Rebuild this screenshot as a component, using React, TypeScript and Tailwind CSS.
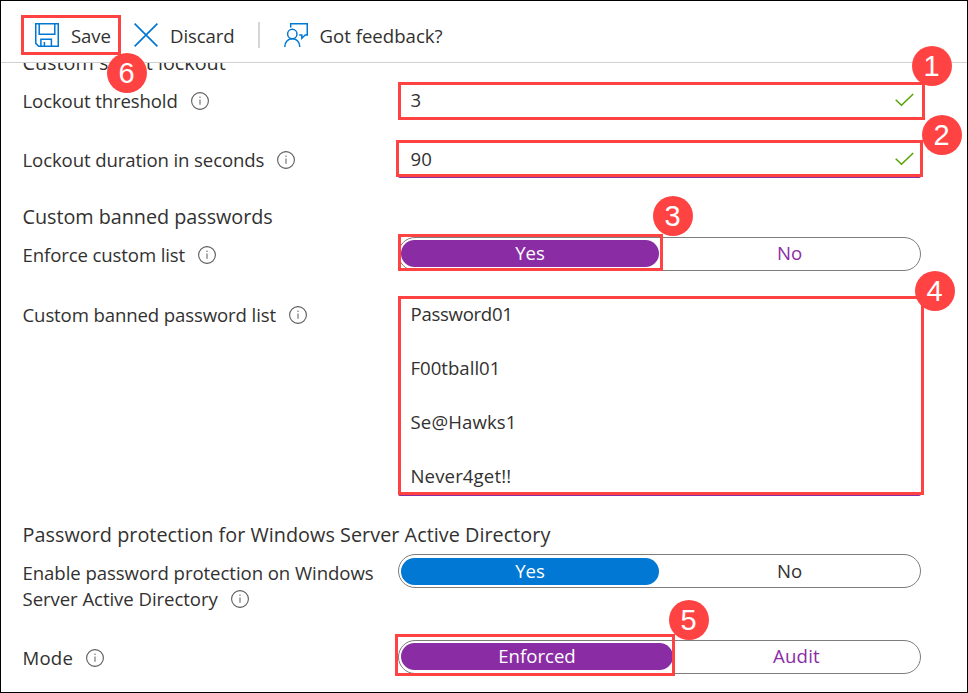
import type { ReactNode } from "react";

function InfoIcon() {
  return (
    <svg className="h-[18px] w-[18px] shrink-0" viewBox="0 0 18 18" fill="none">
      <circle cx="9" cy="9" r="8.4" stroke="#5c5b5a" strokeWidth="1.1" />
      <path d="M9 7.4V12.8" stroke="#777675" strokeWidth="1.2" />
      <circle cx="9" cy="5.2" r="0.8" fill="#777675" />
    </svg>
  );
}

function SaveIcon() {
  return (
    <svg className="h-6 w-6" viewBox="0 0 24 24" fill="none" stroke="#0078d4" strokeWidth="1.5">
      <path d="M0.75 0.75H23.25V23.25H3.6L0.75 20.4Z" />
      <path d="M4.2 0.75V11.3H19.8V0.75" />
      <path d="M5.9 23.25V16.3H16.4V23.25M9.4 19V23.25" />
    </svg>
  );
}

function DiscardIcon() {
  return (
    <svg className="h-6 w-6" viewBox="0 0 24 24" fill="none" stroke="#0078d4" strokeWidth="1.7">
      <path d="M0.6 0.6L23.4 23.4M23.4 0.6L0.6 23.4" />
    </svg>
  );
}

function FeedbackIcon() {
  return (
    <svg className="h-6 w-6" viewBox="0 0 24 24" fill="none" stroke="#0078d4" strokeWidth="1.5">
      <path d="M6.7 4.5V0.75H23.25V12H21.2L17.8 15.2V12H15.2" />
      <circle cx="8.3" cy="11" r="4.7" />
      <path d="M0.75 24C0.75 19 4 15.8 8.3 15.8S15.8 19 15.8 24" />
    </svg>
  );
}

function CheckIcon() {
  return (
    <svg className="h-[14px] w-[19px]" viewBox="0 0 19 14" fill="none" stroke="#57a300" strokeWidth="1.5">
      <path d="M0.7 6.8L6.5 12.3L18.2 1" />
    </svg>
  );
}

function Badge({ n, className }: { n: number; className: string }) {
  return (
    <span
      className={`absolute z-20 flex h-10 w-10 items-center justify-center rounded-full bg-[#ff4343] pr-px font-['Liberation_Sans',Arial,sans-serif] text-[29px] leading-[40px] text-white ${className}`}
    >
      {n}
    </span>
  );
}

function Highlight({ className }: { className: string }) {
  return <span className={`pointer-events-none absolute z-10 border-[3px] border-[#ff4343] ${className}`} />;
}

function Row({ label, className, labelClass, children }: { label: ReactNode; className: string; labelClass: string; children: ReactNode }) {
  return (
    <div className={`flex items-start ${className}`}>
      <div className={`-ml-[0.5px] flex w-[375.5px] shrink-0 items-center gap-[13px] tracking-[-0.12px] whitespace-nowrap ${labelClass}`}>
        {label}
      </div>
      <div className="relative w-[523px] shrink-0">{children}</div>
    </div>
  );
}

function Toggle({ on, off, className, onClass, offClass }: { on: string; off: string; className: string; onClass: string; offClass: string }) {
  return (
    <div className={`flex h-[34px] rounded-full border border-[#7f7d7b] pl-[2px] text-center leading-[26px] ${className}`}>
      <div className={`h-[27px] rounded-full text-white ${onClass}`}>{on}</div>
      <div className={`h-[27px] flex-1 ${offClass}`}>{off}</div>
    </div>
  );
}

export default function App() {
  return (
    <div className="flex h-[693px] w-[968px] flex-col overflow-hidden border border-black bg-white font-['Open_Sans','Noto_Sans',sans-serif] text-[18.6px] leading-[26px] text-[#323130]">
      <header className="relative flex h-[62px] shrink-0 items-start border-b border-[#d2d0ce] pt-[22px] pl-[34px]">
        <button className="flex h-6 w-[76px] items-center gap-3">
          <SaveIcon />
          <span className="pt-[2px] tracking-[-0.1px]">Save</span>
        </button>
        <button className="ml-[23px] flex h-6 items-center gap-3">
          <DiscardIcon />
          <span className="pt-[2px] tracking-[-0.1px]">Discard</span>
        </button>
        <span className="absolute top-[21px] left-[257px] h-[26px] w-[2px] bg-[#d8d6d4]" />
        <button className="absolute top-[22px] left-[283px] flex h-6 items-center gap-[11.5px] whitespace-nowrap">
          <FeedbackIcon />
          <span className="pt-[2px]">Got feedback?</span>
        </button>
        <Highlight className="top-[14px] left-[20px] h-10 w-[100px]" />
        <Badge n={6} className="top-[52px] left-[106px]" />
        <Badge n={1} className="top-[45px] left-[911px]" />
      </header>

      <main className="flex-1 overflow-hidden pl-[22px]">
        <h2 className="-mt-[13px] -ml-[0.5px] h-[26px] text-[19.8px]">Custom smart lockout</h2>

        <Row className="mt-[6px] h-[38px]" labelClass="pt-[6px]" label={<>Lockout threshold<InfoIcon /></>}>
          <div className="flex h-[38px] items-start justify-between pt-[5px] pr-[7px] pl-[12.5px]">
            <span>3</span>
            <span className="pt-[6px]"><CheckIcon /></span>
          </div>
          <Highlight className="top-0 left-0 h-[38px] w-[527px]" />
        </Row>

        <Row className="mt-[20px] h-[38px]" labelClass="pt-[7px]" label={<>Lockout duration in seconds<InfoIcon /></>}>
          <div className="flex h-[38px] items-start justify-between rounded-[2px] border-b border-[#8a2da5] pt-[6px] pr-[7px] pl-[12.5px]">
            <span>90</span>
            <span className="pt-[6px]"><CheckIcon /></span>
          </div>
          <Highlight className="top-0 -left-[2px] h-[37px] w-[527px]" />
          <Badge n={2} className="-top-[25px] left-[524px]" />
        </Row>

        <h2 className="mt-[26px] -ml-[0.5px] h-[26px] text-[19.8px] tracking-[-0.03px]">Custom banned passwords</h2>

        <Row className="mt-[7px] h-[34px]" labelClass="pt-[5px]" label={<>Enforce custom list<InfoIcon /></>}>
          <Toggle on="Yes" off="No" className="pt-[2px]" onClass="w-[258px] bg-[#8a2da5]" offClass="text-[#8a2da5]" />
          <Highlight className="-top-[3px] left-0 h-[37px] w-[265px]" />
          <Badge n={3} className="-top-[41px] left-[255px]" />
        </Row>

        <Row className="mt-[25px] h-[200px]" labelClass="pt-[6px]" label={<>Custom banned password list<InfoIcon /></>}>
          <div className="flex h-[200px] flex-col gap-[28px] rounded-[2px] border-b border-[#8a2da5] pt-[5px] pl-[12.5px]">
            <span className="tracking-[-0.3px]">Password01</span>
            <span>F00tball01</span>
            <span className="tracking-[0.12px]">Se@Hawks1</span>
            <span className="tracking-[0.12px]">Never4get!!</span>
          </div>
          <Highlight className="top-0 left-0 h-[199px] w-[526px]" />
          <Badge n={4} className="-top-[25px] left-[517px]" />
        </Row>

        <h2 className="mt-[26px] -ml-[0.5px] h-[26px] text-[19.8px] tracking-[0.04px] whitespace-nowrap">
          Password protection for Windows Server Active Directory
        </h2>

        <Row
          className="mt-[6px] h-[58px]"
          labelClass="pt-[6px]"
          label={
            <div>
              <div className="tracking-[-0.07px]">Enable password protection on Windows</div>
              <div className="flex items-center gap-[13px] tracking-[-0.07px]">Server Active Directory<InfoIcon /></div>
            </div>
          }
        >
          <Toggle on="Yes" off="No" className="pt-[3px]" onClass="w-[258px] bg-[#0078d4]" offClass="" />
        </Row>

        <Row className="mt-[28px] h-[34px]" labelClass="pt-[5px]" label={<><span className="tracking-[0.2px]">Mode</span><InfoIcon /></>}>
          <Toggle on="Enforced" off="Audit" className="pt-[2px]" onClass="w-[272px] bg-[#8a2da5]" offClass="text-[#8a2da5] tracking-[0.2px]" />
          <Highlight className="-top-[6px] -left-[3px] h-[42px] w-[280px]" />
          <Badge n={5} className="-top-[40px] left-[271px]" />
        </Row>
      </main>
    </div>
  );
}
